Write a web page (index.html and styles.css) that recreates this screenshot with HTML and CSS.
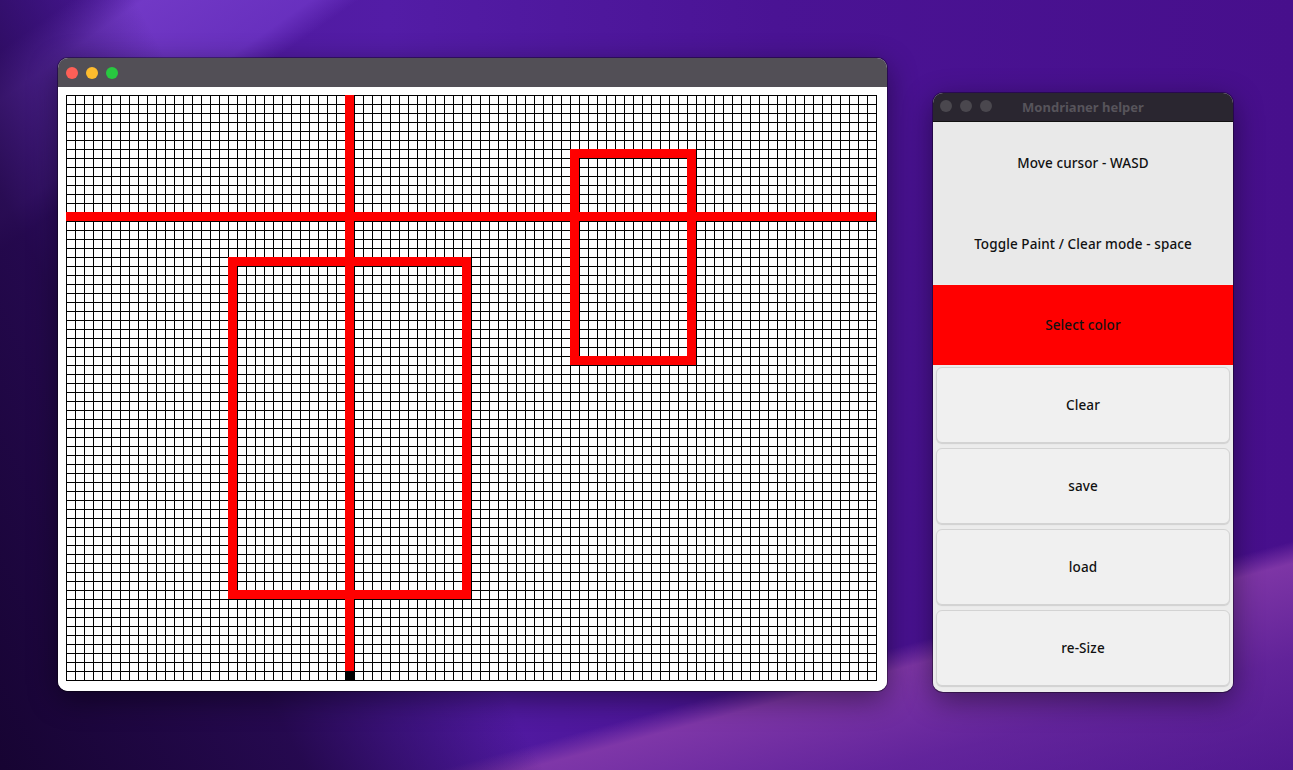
FILE: index.html
```html
<!DOCTYPE html>
<html>
<head>
<meta charset="utf-8">
<link rel="stylesheet" href="styles.css">
</head>
<body>
<div class="desktop">
  <div class="window main-window">
    <div class="titlebar main-titlebar">
      <span class="light red"></span><span class="light yellow"></span><span class="light green"></span>
    </div>
    <div class="main-content">
      <svg class="canvas" width="811" height="586" viewBox="0 0 811 586" xmlns="http://www.w3.org/2000/svg">
        <defs>
          <pattern id="cell" width="9" height="9" patternUnits="userSpaceOnUse">
            <path d="M9 0.5 H0.5 V9" fill="none" stroke="#000" stroke-width="1"/>
          </pattern>
        </defs>
        <rect x="0" y="0" width="811" height="586" fill="#fff"/>
        <rect x="0" y="0" width="811" height="586" fill="url(#cell)"/>
        <line x1="810.5" y1="0" x2="810.5" y2="586" stroke="#000"/>
        <line x1="0" y1="585.5" x2="811" y2="585.5" stroke="#000"/>
        <g fill="#ff0000">
          <rect x="0" y="117" width="810" height="9"/>
          <rect x="279" y="0" width="9" height="576"/>
          <rect x="162" y="162" width="243" height="9"/>
          <rect x="162" y="495" width="243" height="9"/>
          <rect x="162" y="162" width="9" height="342"/>
          <rect x="396" y="162" width="9" height="342"/>
          <rect x="504" y="54" width="126" height="9"/>
          <rect x="504" y="261" width="126" height="9"/>
          <rect x="504" y="54" width="9" height="216"/>
          <rect x="621" y="54" width="9" height="216"/>
        </g>
        <rect x="279" y="576" width="9" height="9" fill="#000"/>
      </svg>
    </div>
  </div>

  <div class="window helper-window">
    <div class="titlebar helper-titlebar">
      <div class="lights">
        <span class="light dim"></span><span class="light dim"></span><span class="light dim"></span>
      </div>
      <div class="title">Mondrianer helper</div>
    </div>
    <div class="helper-content">
      <div class="row label-row">Move cursor - WASD</div>
      <div class="row label-row">Toggle Paint / Clear mode - space</div>
      <div class="row color-row">Select color</div>
      <div class="row button-row"><div class="btn">Clear</div></div>
      <div class="row button-row"><div class="btn">save</div></div>
      <div class="row button-row"><div class="btn">load</div></div>
      <div class="row button-row"><div class="btn">re-Size</div></div>
    </div>
  </div>
</div>
</body>
</html>
```

FILE: styles.css
```css
html, body {
  margin: 0;
  padding: 0;
  width: 1293px;
  height: 770px;
  overflow: hidden;
}

body {
  font-family: "Noto Sans", "Liberation Sans", sans-serif;
}

.desktop {
  position: relative;
  width: 1293px;
  height: 770px;
  background:
    linear-gradient(165deg, rgba(0,0,0,0) 0%, rgba(0,0,0,0) 79.5%, rgba(135,60,170,0.85) 81.5%, rgba(115,48,162,0.6) 90%, rgba(95,38,150,0.4) 100%),
    linear-gradient(145deg, rgba(0,0,0,0) 0%, rgba(0,0,0,0) 3%, rgba(120,62,205,0.85) 6%, rgba(112,55,200,0.75) 13%, rgba(0,0,0,0) 15%),
    linear-gradient(90deg, #4a1898 0%, #531ca6 30%, #4a1394 60%, #470f8c 100%);
}

.desktop::before {
  content: "";
  position: absolute;
  left: 0;
  top: 0;
  width: 1293px;
  height: 770px;
  background:
    linear-gradient(62deg, rgba(20,3,45,0.95) 0%, rgba(30,6,65,0.85) 18%, rgba(40,10,90,0.5) 26%, rgba(0,0,0,0) 32%);
}

.window {
  position: absolute;
  overflow: hidden;
  box-shadow: 0 8px 30px rgba(0,0,0,0.45), 0 0 0 1px rgba(0,0,0,0.35);
}

.main-window {
  left: 58px;
  top: 58px;
  width: 829px;
  height: 633px;
  border-radius: 10px;
  background: #fff;
  display: flex;
  flex-direction: column;
}

.titlebar {
  display: flex;
  align-items: center;
  flex-shrink: 0;
}

.main-titlebar {
  height: 29px;
  background: #524f56;
  padding-left: 8px;
  gap: 8px;
}

.light {
  display: block;
  width: 12px;
  height: 12px;
  border-radius: 50%;
}

.light.red { background: #fe5f57; }
.light.yellow { background: #febc2e; }
.light.green { background: #28c840; }
.light.dim { background: #4a474e; }

.main-content {
  flex: 1;
  background: #fff;
  padding: 8px 10px 10px 8px;
}

.canvas {
  display: block;
  shape-rendering: crispEdges;
}

.helper-window {
  left: 933px;
  top: 93px;
  width: 300px;
  height: 599px;
  border-radius: 10px;
  background: #ececec;
  display: flex;
  flex-direction: column;
}

.helper-titlebar {
  position: relative;
  height: 28px;
  background: #2a2630;
  border-bottom: 1px solid #111;
  justify-content: center;
}

.lights {
  position: absolute;
  left: 7px;
  top: 7px;
  display: flex;
  gap: 8px;
}

.title {
  font-size: 13px;
  font-weight: 700;
  color: #57545b;
}

.helper-content {
  display: flex;
  flex-direction: column;
}

.row {
  height: 81px;
  display: flex;
  align-items: center;
  justify-content: center;
  font-size: 13.5px;
  letter-spacing: 0.1px;
  font-weight: 500;
  color: #111;
}

.label-row {
  background: #e9e9e9;
}

.color-row {
  background: #ff0000;
  margin-top: 1px;
  height: 80px;
}

.button-row {
  background: #ececec;
  padding: 2px 3px 3px 3px;
  box-sizing: border-box;
  align-items: stretch;
}

.btn {
  flex: 1;
  display: flex;
  align-items: center;
  justify-content: center;
  background: #f0f0f0;
  border: 1px solid #d3d3d3;
  border-radius: 6px;
  box-shadow: 0 1px 1px rgba(0,0,0,0.12);
}
```
